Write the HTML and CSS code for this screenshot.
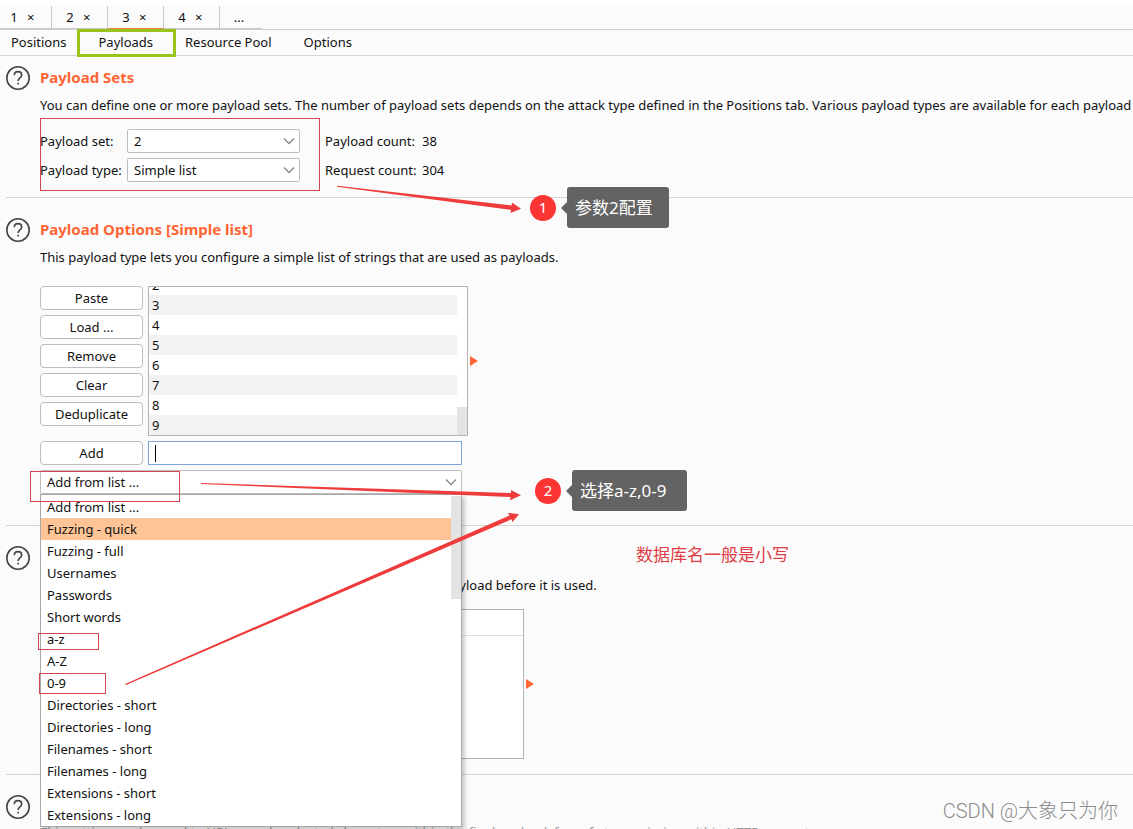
FILE: index.html
```
<!DOCTYPE html>
<html lang="en">
<head>
<meta charset="utf-8">
<title>Payloads</title>
<meta name="viewport" content="width=device-width, initial-scale=1">
<link rel="stylesheet" href="styles.css">
</head>
<body>
<nav class="attack-tabs">
  <div class="attack-tab"><a href="#t1">1</a><button class="close" aria-label="Close tab 1">×</button></div>
  <div class="attack-tab"><a href="#t2">2</a><button class="close" aria-label="Close tab 2">×</button></div>
  <div class="attack-tab attack-tab-active"><a href="#t3">3</a><button class="close" aria-label="Close tab 3">×</button></div>
  <div class="attack-tab"><a href="#t4">4</a><button class="close" aria-label="Close tab 4">×</button></div>
  <div class="attack-tab attack-tab-more"><a href="#more">...</a></div>
</nav>
<nav class="sub-tabs">
  <a href="#positions">Positions</a>
  <a href="#payloads">Payloads</a>
  <a href="#pool">Resource Pool</a>
  <a href="#options">Options</a>
</nav>

<main>
  <section class="panel panel-first">
    <button class="help" aria-label="Help"><svg viewBox="0 0 24 24"><circle cx="12" cy="12" r="11.2"/><path d="M8.3 9.2C8.3 6.9 9.9 5.6 12 5.6S15.700 6.900 15.700 9C15.700 10.700 14.700 11.500 13.500 12.400C12.500 13.200 12.100 13.700 12.100 15"/><path d="M12.100 16.800V18.600"/></svg></button>
    <div class="panel-body">
      <h2>Payload Sets</h2>
      <p class="about">You can define one or more payload sets. The number of payload sets depends on the attack type defined in the Positions tab. Various payload types are available for each payload set.</p>
      <div class="set-grid">
        <label for="set">Payload set:</label>
        <span class="combo"><select id="set"><option>2</option></select><svg viewBox="0 0 12 8"><path d="M1 1.500L6 6.500L11 1.500"/></svg></span>
        <span class="count-label">Payload count:</span><span>38</span>
        <label for="type">Payload type:</label>
        <span class="combo"><select id="type"><option>Simple list</option></select><svg viewBox="0 0 12 8"><path d="M1 1.500L6 6.500L11 1.500"/></svg></span>
        <span class="count-label">Request count:</span><span>304</span>
      </div>
    </div>
  </section>

  <section class="panel panel-options">
    <button class="help" aria-label="Help"><svg viewBox="0 0 24 24"><circle cx="12" cy="12" r="11.2"/><path d="M8.3 9.2C8.3 6.9 9.9 5.6 12 5.6S15.700 6.900 15.700 9C15.700 10.700 14.700 11.500 13.500 12.400C12.500 13.200 12.100 13.700 12.100 15"/><path d="M12.100 16.800V18.600"/></svg></button>
    <div class="panel-body">
      <h2>Payload Options [Simple list]</h2>
      <p class="about">This payload type lets you configure a simple list of strings that are used as payloads.</p>
      <div class="list-row">
        <div class="actions">
          <button class="btn">Paste</button>
          <button class="btn">Load ...</button>
          <button class="btn">Remove</button>
          <button class="btn">Clear</button>
          <button class="btn">Deduplicate</button>
        </div>
        <div class="list">
          <ul>
            <li>2</li><li>3</li><li>4</li><li>5</li><li>6</li><li>7</li><li>8</li><li>9</li>
          </ul>
          <div class="list-track"><div class="list-thumb"></div></div>
        </div>
        <span class="expand"></span>
      </div>
      <div class="add-row">
        <button class="btn">Add</button>
        <div class="entry"><input type="text" aria-label="New item"><span class="caret"></span></div>
      </div>
      <div class="add-list">
        <span class="combo"><select aria-label="Add from list"><option>Add from list ...</option></select><svg viewBox="0 0 12 8"><path d="M1 1.500L6 6.500L11 1.500"/></svg></span>
        <div class="menu">
          <ul role="listbox" aria-label="Lists">
            <li role="option">Add from list ...</li>
            <li role="option" aria-selected="true" class="menu-active">Fuzzing - quick</li>
            <li role="option">Fuzzing - full</li>
            <li role="option">Usernames</li>
            <li role="option">Passwords</li>
            <li role="option">Short words</li>
            <li role="option">a-z</li>
            <li role="option">A-Z</li>
            <li role="option">0-9</li>
            <li role="option">Directories - short</li>
            <li role="option">Directories - long</li>
            <li role="option">Filenames - short</li>
            <li role="option">Filenames - long</li>
            <li role="option">Extensions - short</li>
            <li role="option">Extensions - long</li>
          </ul>
          <div class="menu-track"><div class="menu-thumb"></div></div>
        </div>
      </div>
    </div>
  </section>

  <section class="panel">
    <button class="help" aria-label="Help"><svg viewBox="0 0 24 24"><circle cx="12" cy="12" r="11.2"/><path d="M8.3 9.2C8.3 6.9 9.9 5.6 12 5.6S15.700 6.900 15.700 9C15.700 10.700 14.700 11.500 13.500 12.400C12.500 13.200 12.100 13.700 12.100 15"/><path d="M12.100 16.800V18.600"/></svg></button>
    <div class="panel-body">
      <h2>Payload Processing</h2>
      <p class="about">You can define rules to perform various processing tasks on each&nbsp; payload before it is used.</p>
      <div class="rules-row">
        <div class="rules"><div class="rules-head"></div></div>
        <span class="expand"></span>
      </div>
    </div>
  </section>

  <section class="panel panel-last">
    <button class="help" aria-label="Help"><svg viewBox="0 0 24 24"><circle cx="12" cy="12" r="11.2"/><path d="M8.3 9.2C8.3 6.9 9.9 5.6 12 5.6S15.700 6.900 15.700 9C15.700 10.700 14.700 11.500 13.500 12.400C12.500 13.200 12.100 13.700 12.100 15"/><path d="M12.100 16.800V18.600"/></svg></button>
    <div class="panel-body">
      <h2>Payload Encoding</h2>
      <p class="about">This setting can be used to URL-encode selected characters within the final payload, for safe transmission within HTTP requests.</p>
    </div>
  </section>
</main>

<svg class="marks" width="700" height="720" viewBox="0 0 700 720" aria-hidden="true">
  <rect class="mark-green" x="78.500" y="30.500" width="96" height="25"/>
  <rect class="mark-red" x="40.500" y="118.500" width="279" height="72"/>
  <rect class="mark-red" x="30.500" y="471.500" width="149" height="30"/>
  <rect class="mark-red" x="38.500" y="633.500" width="60" height="16"/>
  <rect class="mark-red" x="39.500" y="673.500" width="66" height="20"/>
  <path class="arrow" d="M337 185.800L511.500 205.500L512 202.500L521 208.800L510.500 213L511 209.800L337 186.800Z"/>
  <path class="arrow" d="M201 483L511 493L511 490L521 495.200L510 500.300L510.500 497L201 484Z"/>
  <path class="arrow" d="M125 684L509.500 515.500L508 512.700L519 514.300L512.500 522L511.500 519.300L126 685Z"/>
</svg>
<div class="note note-one"><span class="note-number">1</span><span class="note-text">参数2配置</span></div>
<div class="note note-two"><span class="note-number">2</span><span class="note-text">选择a-z,0-9</span></div>
<p class="remark">数据库名一般是小写</p>
<p class="watermark">CSDN @大象只为你</p>
</body>
</html>
```

FILE: styles.css
```
* { box-sizing: border-box; }

body {
  position: relative;
  height: 100vh;
  margin: 0;
  padding-top: 6px;
  overflow: hidden;
  background: linear-gradient(#fff 6px, #fbfbfb 6px);
  color: #111;
  font: 13px/20px "Noto Sans", "Noto Sans CJK SC", sans-serif;
}

h2, p, ul { margin: 0; padding: 0; }
ul { list-style: none; }
a { color: inherit; text-decoration: none; }
button, input, select { font: inherit; color: inherit; }

/* Attack tabs */
.attack-tabs { display: flex; border-bottom: 1px solid #d0d0d0; }
.attack-tab {
  display: flex;
  align-items: center;
  justify-content: center;
  gap: 7px;
  width: 56px;
  height: 23px;
  padding-bottom: 1px;
  border-right: 1px solid #c8c8c8;
  border-bottom: 1px solid #c8c8c8;
}
.attack-tab:first-child { width: 52px; padding-right: 4px; }
.attack-tab-active { border-bottom-color: #f0803c; }
.attack-tab-more { width: 42px; padding-right: 4px; border-right: 0; }
.close { width: 12px; padding: 0; border: 0; background: none; line-height: 20px; }

/* Section tabs */
.sub-tabs {
  display: flex;
  gap: 32px;
  padding: 2px 11px 3px;
  border-bottom: 1px solid #d4d4d4;
}

/* Panels */
.panel {
  display: flex;
  gap: 10px;
  margin-left: 6px;
  padding: 21px 0 15px;
  border-bottom: 1px solid #d4d4d4;
}
.panel-first { padding-top: 11px; }
.panel-options { padding-bottom: 31px; }
.panel-last { border-bottom: 0; }
.panel-body { flex: 1; min-width: 0; }
.help { width: 24px; height: 24px; margin-top: -1px; padding: 0; border: 0; background: none; }
.help svg { display: block; width: 24px; height: 24px; fill: none; stroke: #444; stroke-width: 1.6; }
h2 { color: #ff6633; font-size: 15px; font-weight: 700; line-height: 20px; }
.about { margin-top: 8px; overflow: hidden; white-space: nowrap; }
.panel-last .about { margin-top: 6px; color: #999; }

.set-grid {
  display: grid;
  grid-template-columns: 87px 173px 122px 1fr;
  gap: 5px 0;
  align-items: center;
  margin-top: 14px;
}
.count-label { padding-left: 25px; }

.combo { position: relative; display: block; }
.combo select {
  display: block;
  width: 100%;
  height: 24px;
  padding: 0 6px;
  border: 1px solid #bdbdbd;
  border-radius: 2px;
  background: #fff;
  appearance: none;
}
.combo svg {
  position: absolute;
  top: 8px;
  right: 5px;
  width: 12px;
  height: 8px;
  fill: none;
  stroke: #888;
  stroke-width: 1.3;
  pointer-events: none;
}

.btn {
  width: 103px;
  height: 24px;
  padding: 0;
  border: 1px solid #bdbdbd;
  border-radius: 4px;
  background: #fff;
}

/* Payload list */
.list-row { display: flex; gap: 5px; margin-top: 19px; }
.actions { display: flex; flex-direction: column; gap: 5px; }
.list {
  display: flex;
  align-items: flex-end;
  width: 320px;
  height: 150px;
  overflow: hidden;
  border: 1px solid #b4b4b4;
  background: #fff;
}
.list ul { flex: 1; }
.list li { height: 20px; padding-left: 3px; }
.list li:nth-child(even) { background: #f2f2f2; }
.list-track { display: flex; align-items: flex-end; width: 10px; height: 100%; }
.list-thumb { width: 100%; height: 28px; background: #e3e3e3; }
.expand {
  align-self: center;
  margin-left: -3px;
  border: solid transparent;
  border-width: 5px 0 5px 8px;
  border-left-color: #ff6633;
}

.add-row { display: flex; gap: 5px; margin-top: 5px; }
.entry { position: relative; width: 314px; }
.entry input {
  display: block;
  width: 100%;
  height: 24px;
  padding: 0 6px;
  border: 1px solid #7fa6d8;
  outline: 0;
  background: #fff;
}
.caret { position: absolute; top: 4px; left: 7px; width: 1px; height: 17px; background: #000; }

.add-list { position: relative; width: 422px; margin-top: 5px; }
.menu {
  position: absolute;
  z-index: 1;
  top: 100%;
  left: 0;
  display: flex;
  width: 100%;
  padding-top: 1px;
  border: 1px solid #a8a8a8;
  background: #fff;
  box-shadow: 3px 3px 4px rgba(0, 0, 0, 0.2);
}
.menu ul { flex: 1; }
.menu li { padding-left: 6px; line-height: 22px; }
.menu-active { background: #ffc496; }
.menu-track { width: 10px; }
.menu-thumb { height: 103px; background: #e3e3e3; }

/* Processing rules */
.rules-row { display: flex; gap: 5px; margin-top: 14px; padding-left: 108px; }
.rules { width: 376px; height: 150px; border: 1px solid #b4b4b4; background: #fff; }
.rules-head { height: 26px; border-bottom: 1px solid #e0e0e0; }

/* Annotations */
.marks { position: absolute; z-index: 2; top: 0; left: 0; pointer-events: none; }
.mark-green { fill: none; stroke: #98c21d; stroke-width: 3; }
.mark-red { fill: none; stroke: #d2464f; stroke-width: 1; }
.arrow { fill: #ee3b3b; }

.note { position: absolute; z-index: 3; display: flex; align-items: center; gap: 11px; color: #fff; }
.note-one { top: 187px; left: 530px; }
.note-two { top: 470px; left: 535px; }
.note-number {
  width: 26px;
  height: 26px;
  border-radius: 50%;
  background: #fb3434;
  font-size: 15px;
  line-height: 24px;
  text-align: center;
}
.note-text {
  position: relative;
  padding: 0 16px 0 8px;
  border-radius: 3px;
  background: #636363;
  font-size: 17px;
  line-height: 41px;
}
.note-two .note-text { padding-right: 21px; }
.note-text::before {
  content: "";
  position: absolute;
  top: 15px;
  left: -6px;
  border: solid transparent;
  border-width: 6px 6px 6px 0;
  border-right-color: #636363;
}
.remark { position: absolute; top: 543px; left: 636px; color: #e03c46; font-size: 17px; line-height: 24px; }
.watermark {
  position: absolute;
  right: 15px;
  bottom: 6px;
  color: #8c8c8c;
  font: 300 20px/24px Roboto, "Noto Sans CJK SC", sans-serif;
}
```
